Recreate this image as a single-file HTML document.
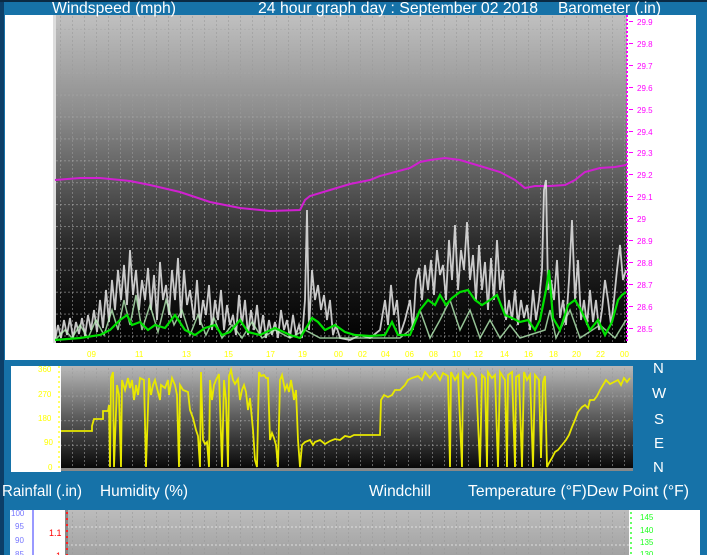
<!DOCTYPE html>
<html><head><meta charset="utf-8"><style>
html,body{margin:0;padding:0;width:707px;height:555px;overflow:hidden;background:#1672a8}
svg{display:block}
text{font-family:"Liberation Sans",sans-serif}
</style></head><body>
<svg width="707" height="555" viewBox="0 0 707 555" xmlns="http://www.w3.org/2000/svg">
<defs>
<linearGradient id="g1" x1="0" y1="0" x2="0" y2="1">
<stop offset="0" stop-color="#c0c0c0"/><stop offset="0.3" stop-color="#8c8c8c"/><stop offset="0.5" stop-color="#5c5c5c"/><stop offset="0.7" stop-color="#2a2a2a"/><stop offset="0.85" stop-color="#121212"/><stop offset="1" stop-color="#000"/>
</linearGradient>
<linearGradient id="g2" x1="0" y1="0" x2="0" y2="1">
<stop offset="0" stop-color="#b8b8b8"/><stop offset="0.5" stop-color="#5a5a5a"/><stop offset="1" stop-color="#050505"/>
</linearGradient>
<linearGradient id="g3" x1="0" y1="0" x2="0" y2="1">
<stop offset="0" stop-color="#bcbcbc"/><stop offset="1" stop-color="#a2a2a2"/>
</linearGradient>
<pattern id="vg" width="12" height="4" patternUnits="userSpaceOnUse"><rect x="0" y="0" width="1" height="2" fill="#9a9a9a" opacity="0.6"/></pattern>
<pattern id="hg" width="4" height="21.9" patternUnits="userSpaceOnUse" y="0"><rect x="0" y="7" width="2" height="1" fill="#a8a8a8" opacity="0.6"/></pattern>
<pattern id="hg2" width="4" height="24.6" patternUnits="userSpaceOnUse"><rect x="0" y="2" width="2" height="1" fill="#a8a8a8" opacity="0.6"/></pattern>
</defs>
<rect x="0" y="0" width="4" height="555" fill="#0c3f68"/>
<rect x="0" y="0" width="707" height="2" fill="#0a2a44"/>

<rect x="5" y="15" width="691" height="345" fill="#fff"/>
<rect x="53" y="15" width="574" height="328" fill="url(#g1)"/>
<rect x="53" y="15" width="574" height="328" fill="url(#vg)"/>
<rect x="53" y="15" width="574" height="328" fill="url(#hg)"/>
<rect x="53" y="15" width="3" height="328" fill="#ddd"/>
<line x1="627" y1="15" x2="627" y2="343" stroke="#f0f" stroke-width="2" stroke-dasharray="2,2"/>
<g fill="#f0f" font-size="8">
<text x="637" y="25">29.9</text><text x="637" y="47">29.8</text><text x="637" y="69">29.7</text><text x="637" y="91">29.6</text><text x="637" y="113">29.5</text><text x="637" y="135">29.4</text><text x="637" y="156">29.3</text><text x="637" y="178">29.2</text><text x="637" y="200">29.1</text><text x="637" y="222">29</text><text x="637" y="244">28.9</text><text x="637" y="266">28.8</text><text x="637" y="288">28.7</text><text x="637" y="310">28.6</text><text x="637" y="332">28.5</text>
</g>
<g fill="#f0f"><rect x="629" y="21" width="4" height="1"/><rect x="629" y="43" width="4" height="1"/><rect x="629" y="65" width="4" height="1"/><rect x="629" y="87" width="4" height="1"/><rect x="629" y="109" width="4" height="1"/><rect x="629" y="131" width="4" height="1"/><rect x="629" y="152" width="4" height="1"/><rect x="629" y="174" width="4" height="1"/><rect x="629" y="196" width="4" height="1"/><rect x="629" y="218" width="4" height="1"/><rect x="629" y="240" width="4" height="1"/><rect x="629" y="262" width="4" height="1"/><rect x="629" y="284" width="4" height="1"/><rect x="629" y="306" width="4" height="1"/><rect x="629" y="328" width="4" height="1"/></g>
<polyline fill="none" stroke="#d020d0" stroke-width="2" points="55,180 80,178 100,178 130,181 150,185 180,192 210,202 240,208 270,211 300,210 305,200 310,196 330,190 350,184 370,180 380,176 395,172 410,168 420,162 430,160 445,158 460,160 480,166 500,172 515,180 525,188 535,186 550,186 565,185 575,180 585,172 600,168 615,167 626,165"/>
<polyline fill="none" stroke="#e8e8e8" stroke-width="1.8" opacity="0.85" points="55,340 58,325 61,338 64,320 67,335 70,318 73,338 76,322 79,334 82,318 85,336 88,315 91,330 94,310 97,332 100,300 103,328 106,290 109,322 112,280 115,310 118,270 121,300 124,265 127,305 130,250 133,295 136,270 139,310 142,280 145,300 148,268 151,310 154,275 157,320 160,262 163,300 166,285 169,315 172,270 175,300 178,258 181,318 184,270 187,305 190,290 194,320 197,280 200,325 203,300 206,315 209,285 212,330 215,300 218,320 221,290 224,330 227,305 230,325 233,315 236,335 239,295 242,325 245,300 248,335 251,310 254,330 257,305 260,335 263,315 266,338 269,320 272,335 275,322 278,338 281,310 284,330 287,320 290,338 293,315 296,335 299,325 302,338 305,300 307,210 309,330 312,270 315,300 318,285 321,310 324,295 327,320 330,300 333,335 336,325 340,338 350,340 360,335 370,338 380,330 385,300 388,325 391,285 394,315 397,300 400,335 405,320 410,300 413,330 416,280 419,268 422,300 425,265 428,290 431,260 434,295 437,250 440,275 443,265 446,300 449,240 452,280 455,225 458,290 461,250 464,270 467,222 470,280 473,255 476,300 479,245 482,290 485,262 488,310 491,258 494,300 497,240 500,290 503,270 506,320 509,300 512,320 515,290 518,325 521,300 524,318 527,305 530,330 533,290 536,320 539,300 542,270 544,190 546,180 548,290 551,280 554,300 557,260 560,318 563,300 566,325 569,280 572,220 575,300 578,260 581,320 584,300 587,325 590,290 593,322 596,300 599,330 602,310 605,280 608,300 611,325 614,300 617,270 620,245 623,280 626,270"/>
<polyline fill="none" stroke="#b8f0b8" stroke-width="1.5" opacity="0.8" points="55,340 65,330 72,338 80,325 88,338 96,320 104,335 112,310 118,330 124,300 130,325 136,295 142,330 150,305 158,332 166,300 174,325 182,310 190,335 198,315 206,335 214,318 222,338 232,325 242,338 252,322 262,338 275,330 290,338 305,330 320,338 400,338 410,330 420,310 430,338 440,320 450,300 460,330 470,310 480,338 490,320 500,338 510,325 520,338 545,330 550,310 556,338 570,310 580,338 600,325 615,338 626,320"/>
<polyline fill="none" stroke="#00e000" stroke-width="2.2" points="55,340 80,338 100,335 110,330 120,320 127,315 132,325 140,322 148,330 155,325 165,328 175,315 185,330 195,335 205,328 215,325 222,335 230,332 240,320 248,332 260,335 275,328 290,335 300,338 308,325 312,318 318,322 325,330 335,325 345,332 355,335 370,336 385,335 392,322 398,335 410,335 420,310 428,300 435,305 440,295 446,305 452,298 460,292 468,290 475,300 482,305 490,300 497,295 505,315 512,318 520,322 528,320 535,330 540,320 546,290 549,270 553,318 560,330 568,305 575,300 581,310 590,330 598,320 605,335 612,322 618,300 622,295 626,292"/>
<g fill="#ffff00" font-size="8">
<text x="87" y="357">09</text><text x="135" y="357">11</text><text x="182" y="357">13</text><text x="224" y="357">15</text><text x="266" y="357">17</text><text x="298" y="357">19</text><text x="334" y="357">00</text><text x="358" y="357">02</text><text x="381" y="357">04</text><text x="405" y="357">06</text><text x="429" y="357">08</text><text x="452" y="357">10</text><text x="474" y="357">12</text><text x="500" y="357">14</text><text x="524" y="357">16</text><text x="549" y="357">18</text><text x="572" y="357">20</text><text x="596" y="357">22</text><text x="620" y="357">00</text>
</g>

<rect x="11" y="366" width="50" height="106" fill="#fff"/>
<rect x="61" y="366" width="572" height="104" fill="url(#g2)"/>
<rect x="61" y="366" width="572" height="104" fill="url(#vg)"/>
<rect x="61" y="366" width="572" height="104" fill="url(#hg2)"/>
<rect x="61" y="468" width="572" height="3" fill="#888"/>
<line x1="59" y1="366" x2="59" y2="470" stroke="#ffff66" stroke-width="2" stroke-dasharray="2,3"/>
<g fill="#ffff00" font-size="8">
<text x="38" y="372">360</text><text x="38" y="397">270</text><text x="38" y="421">180</text><text x="44" y="445">90</text><text x="48" y="470">0</text>
</g>
<polyline fill="none" stroke="#e8e800" stroke-width="1.8" points="61,431 92,431 92,426 94,419 103,419 103,411 108,411 109,405 110,467 111,378 113,372 114,467 117,385 119,395 121,467 122,380 125,390 128,378 130,388 132,380 134,400 136,385 138,395 140,378 144,380 146,467 149,378 151,395 153,385 155,380 158,392 160,400 161,385 165,388 168,380 169,395 172,378 175,385 177,395 179,467 180,385 183,390 188,392 190,410 193,418 196,430 198,436 200,467 201,372 203,440 205,444 207,442 209,467 210,380 212,400 214,385 216,380 219,374 222,467 224,380 226,400 228,467 229,376 231,370 233,380 235,384 238,379 240,400 242,390 244,385 246,392 248,410 250,398 253,430 255,460 257,467 259,372 261,376 264,375 266,378 268,378 270,440 272,433 274,438 276,445 278,467 280,380 282,375 285,390 287,385 289,392 291,380 293,392 294,400 296,390 298,440 300,467 302,445 305,442 310,440 313,445 315,442 320,440 325,444 330,441 335,439 340,440 345,436 350,437 354,435 356,435 380,435 381,400 384,395 388,397 392,395 395,390 400,390 405,385 408,380 412,378 418,376 422,380 425,372 430,378 435,372 440,380 443,373 448,376 450,467 451,372 455,380 458,375 462,467 463,372 468,378 472,373 476,378 480,467 482,375 485,378 487,467 488,372 492,378 495,375 498,467 500,372 505,380 507,467 508,375 512,372 515,467 516,377 519,375 522,467 524,372 527,380 530,375 533,467 535,375 539,380 541,458 543,382 545,376 547,467 549,463 552,458 555,452 558,450 562,445 566,440 569,435 572,427 575,420 578,412 582,407 585,405 588,408 590,400 594,400 597,396 600,390 603,385 606,380 610,384 614,382 618,380 621,385 624,378 627,382 630,378"/>
<g fill="#fff" font-size="15">
<text x="653" y="373">N</text><text x="652" y="398">W</text><text x="654" y="424">S</text><text x="654" y="448">E</text><text x="653" y="472">N</text>
</g>

<g fill="#fff" font-size="16">
<text x="52" y="13" textLength="124" lengthAdjust="spacingAndGlyphs">Windspeed (mph)</text>
<text x="258" y="13" textLength="280" lengthAdjust="spacingAndGlyphs">24 hour graph day : September 02 2018</text>
<text x="558" y="13" textLength="103" lengthAdjust="spacingAndGlyphs">Barometer (.in)</text>
<text x="2" y="496" textLength="80" lengthAdjust="spacingAndGlyphs">Rainfall (.in)</text>
<text x="100" y="496" textLength="88" lengthAdjust="spacingAndGlyphs">Humidity (%)</text>
<text x="369" y="496" textLength="62" lengthAdjust="spacingAndGlyphs">Windchill</text>
<text x="468" y="496" textLength="221" lengthAdjust="spacingAndGlyphs">Temperature (°F)Dew Point (°F)</text>
</g>

<rect x="10" y="510" width="690" height="45" fill="#fff"/>
<rect x="67" y="510" width="562" height="45" fill="url(#g3)"/>
<rect x="67" y="510" width="562" height="45" fill="url(#vg)"/>
<line x1="67" y1="527" x2="629" y2="527" stroke="#ddd" stroke-dasharray="2,2"/>
<line x1="67" y1="545" x2="629" y2="545" stroke="#ddd" stroke-dasharray="2,2"/>
<rect x="65" y="510" width="3" height="45" fill="#888"/>
<line x1="67" y1="512" x2="67" y2="555" stroke="#f22" stroke-width="2" stroke-dasharray="2,4"/>
<line x1="33" y1="510" x2="33" y2="555" stroke="#99f" stroke-width="2"/>
<g fill="#77f" font-size="8"><text x="11" y="516">100</text><text x="15" y="529">95</text><text x="15" y="543">90</text><text x="15" y="557">85</text></g>
<g fill="#f00" font-size="9"><text x="49" y="536">1.1</text><text x="56" y="559">1</text></g>
<line x1="631" y1="512" x2="631" y2="555" stroke="#6f6" stroke-width="2" stroke-dasharray="2,3"/>
<g fill="#2f2" font-size="8"><text x="640" y="520">145</text><text x="640" y="533">140</text><text x="640" y="545">135</text><text x="640" y="557">130</text></g>
</svg>
</body></html>
